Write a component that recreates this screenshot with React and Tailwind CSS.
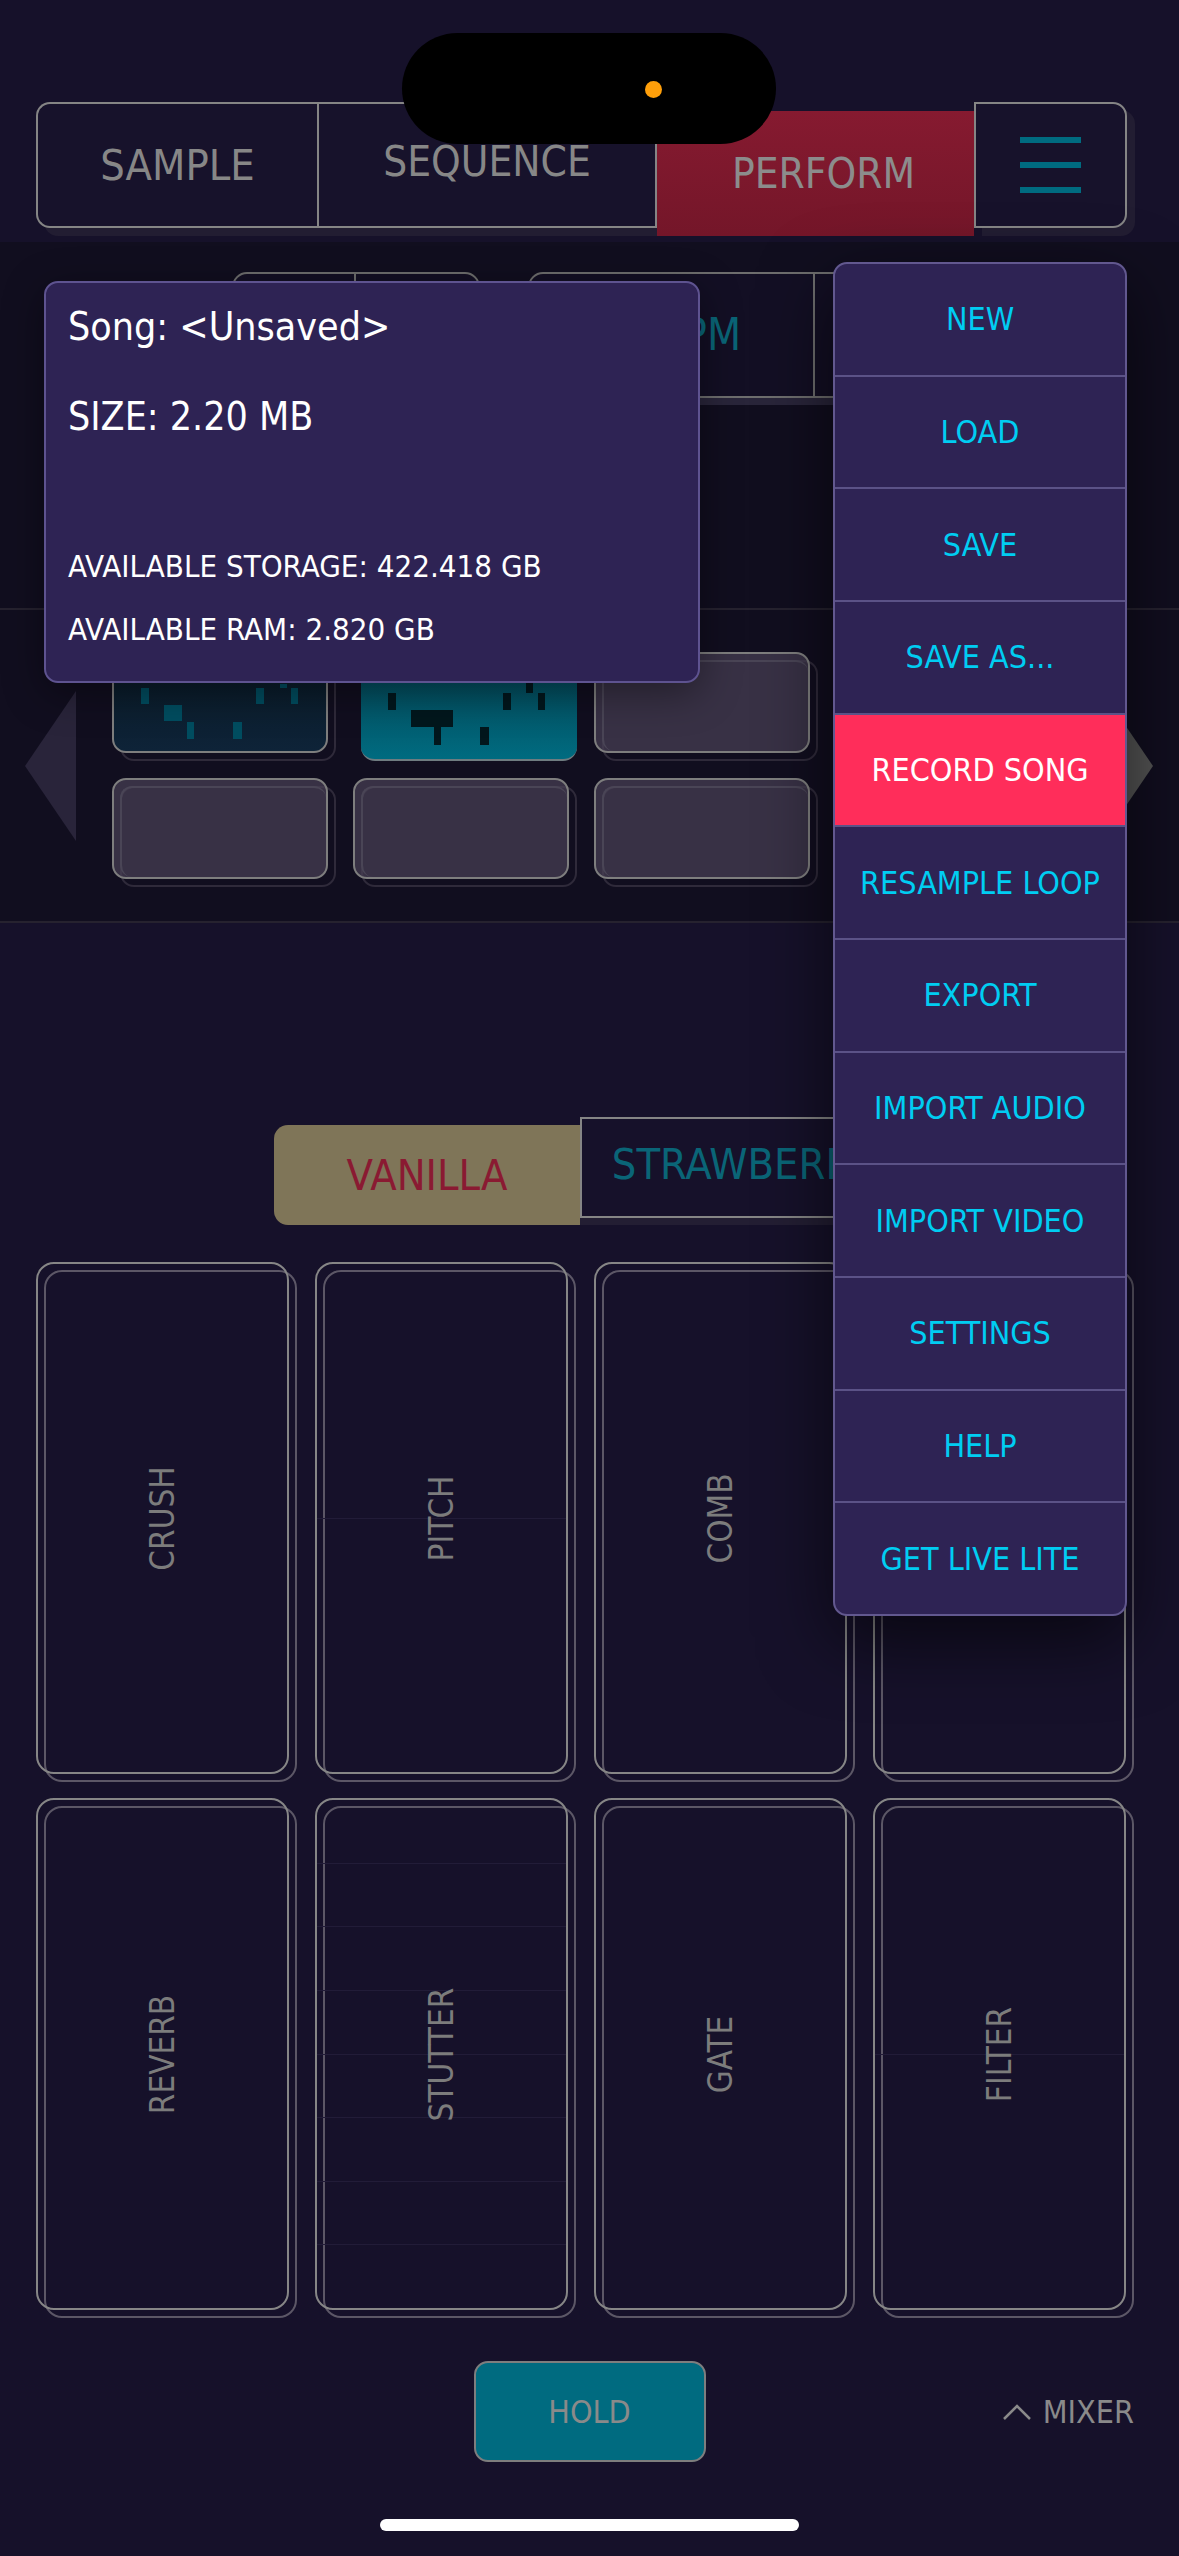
import React from "react";

const menuItems = [
  "NEW",
  "LOAD",
  "SAVE",
  "SAVE AS...",
  "RECORD SONG",
  "RESAMPLE LOOP",
  "EXPORT",
  "IMPORT AUDIO",
  "IMPORT VIDEO",
  "SETTINGS",
  "HELP",
  "GET LIVE LITE",
];

// the fourth pad of the top row sits under the menu, its label is never seen
const effects = [
  { name: "CRUSH", steps: 1 },
  { name: "PITCH", steps: 2 },
  { name: "COMB", steps: 1 },
  { name: "", steps: 1 },
  { name: "REVERB", steps: 1 },
  { name: "STUTTER", steps: 8 },
  { name: "GATE", steps: 1 },
  { name: "FILTER", steps: 2 },
];

// little rectangles drawn inside the two loaded loop pads
const dimBlocks = [
  [27, 34, 8, 16],
  [50, 51, 18, 16],
  [73, 68, 7, 17],
  [119, 68, 9, 17],
  [142, 34, 8, 16],
  [166, 30, 7, 4],
  [177, 34, 7, 16],
];
const litBlocks = [
  [27, 33, 8, 17],
  [50, 50, 42, 17],
  [73, 67, 7, 18],
  [119, 67, 9, 18],
  [142, 33, 8, 17],
  [165, 16, 7, 17],
  [177, 33, 7, 17],
];

function Blocks({ blocks, color }) {
  return (
    <svg className="absolute inset-0" width="216" height="101" viewBox="0 0 216 101">
      {blocks.map(([x, y, w, h], i) => (
        <rect key={i} x={x} y={y} width={w} height={h} fill={color} />
      ))}
    </svg>
  );
}

/** One cell of the loop grid: empty, loaded (dim) or playing (lit, pressed in). */
function LoopPad({ kind }) {
  if (kind === "lit") {
    return (
      <div className="relative h-[101px] w-[216px] translate-x-2 translate-y-2 overflow-hidden rounded-[14px] border-b-2 border-[#6f7c80] bg-gradient-to-b from-[#034656] to-[#006b80]">
        <Blocks blocks={litBlocks} color="#02171d" />
      </div>
    );
  }
  return (
    <div className="relative h-[101px] w-[216px]">
      <div className="absolute inset-0 translate-x-2 translate-y-2 rounded-[14px] border-2 border-[#2f2a3a]" />
      {kind === "dim" ? (
        <div className="relative h-full w-full overflow-hidden rounded-[14px] border-2 border-[#7e7e7e] bg-gradient-to-b from-[#091a26] to-[#0e2338]">
          <Blocks blocks={dimBlocks} color="#004d60" />
        </div>
      ) : (
        <div className="relative h-full w-full rounded-[14px] border-2 border-[#7e7e7e] bg-[rgba(72,64,84,0.72)]">
          <div className="absolute left-[6px] top-[6px] h-[calc(100%-6px)] w-[calc(100%-6px)] rounded-[12px] border-t-2 border-l-2 border-[#4a4556]" />
        </div>
      )}
    </div>
  );
}

function EffectPad({ name, steps }) {
  return (
    <div className="relative h-[512px] w-[253px]">
      <div className="absolute inset-0 translate-x-2 translate-y-2 rounded-[18px] border-2 border-[#5c5766]" />
      <div className="relative flex h-full w-full items-center justify-center overflow-hidden rounded-[18px] border-2 border-[#868686]">
        {steps > 1 && (
          <div className="absolute inset-0 flex flex-col">
            {Array.from({ length: steps }).map((_, i) => (
              <div key={i} className="flex-1 border-b border-[#221c38] last:border-b-0" />
            ))}
          </div>
        )}
        {name && (
          <span className="-rotate-90 whitespace-nowrap text-[33px] leading-none text-[#7c7c7c]">{name}</span>
        )}
      </div>
    </div>
  );
}

export default function App() {
  return (
    <div className="relative h-[2556px] w-[1179px] overflow-hidden bg-[#16112a] font-['Liberation_Sans_Narrow','DejaVu_Sans_Condensed','DejaVu_Sans',sans-serif] font-stretch-condensed">
      <div className="flex flex-col">
        {/* mode tabs */}
        <div className="flex items-start pl-[36px] pt-[102px]">
          <div className="flex h-[126px] w-[621px] rounded-l-[14px] border-2 border-r-0 border-[#858585] bg-[#17122b] shadow-[8px_8px_0_0_#221d32]">
            <div className="flex w-[281px] items-center justify-center border-r-2 border-[#858585] text-[43px] leading-none text-[#878787]">
              SAMPLE
            </div>
            <div className="flex flex-1 items-center justify-center border-r-2 border-[#858585] pb-[6px] text-[42px] leading-none text-[#878787]">
              SEQUENCE
            </div>
          </div>
          <div className="mt-[9px] flex h-[125px] w-[317px] items-center justify-center bg-gradient-to-b from-[#861a30] to-[#741629] pl-[16px] text-[42px] leading-none text-[#8c8c8c]">
            PERFORM
          </div>
          <div className="flex h-[126px] w-[153px] flex-col items-center justify-center gap-[19px] rounded-r-[14px] border-2 border-[#858585] bg-[#17122b] shadow-[8px_8px_0_0_#221d32]">
            <span className="h-[6px] w-[61px] bg-[#006b80]" />
            <span className="h-[6px] w-[61px] bg-[#006b80]" />
            <span className="h-[6px] w-[61px] bg-[#006b80]" />
          </div>
        </div>

        {/* song / loop section */}
        <div className="mt-[6px] flex h-[681px] flex-col bg-[#110e1f]">
          <div className="mt-[30px] flex h-[126px] items-start gap-[48px] pl-[232px] pr-[53px]">
            <div className="flex h-[126px] w-[248px] rounded-[15px] border-2 border-[#6e6e6e] bg-[#130f24] shadow-[0_7px_0_0_#29253a]">
              <div className="w-[122px] border-r-2 border-[#6e6e6e]" />
              <div className="flex-1" />
            </div>
            <div className="flex h-[126px] flex-1 rounded-[15px] border-2 border-[#6e6e6e] bg-[#130f24] shadow-[0_7px_0_0_#29253a]">
              <div className="flex w-[285px] items-center justify-center border-r-2 border-[#6e6e6e] pr-[34px] text-[44px] leading-none text-[#0a6577]">
                120 BPM
              </div>
              <div className="flex-1" />
            </div>
          </div>
          <div className="h-[210px]" />
          <div className="flex h-[315px] items-center border-y-2 border-[#26222f] pl-[25px]">
            <svg width="51" height="150" viewBox="0 0 51 150">
              <polygon points="51,0 0,75 51,150" fill="#29243a" />
            </svg>
            <div className="ml-[36px] grid grid-cols-[repeat(4,216px)] gap-x-[25px] gap-y-[25px]">
              <LoopPad kind="dim" />
              <LoopPad kind="lit" />
              <LoopPad kind="empty" />
              <LoopPad kind="empty" />
              <LoopPad kind="empty" />
              <LoopPad kind="empty" />
              <LoopPad kind="empty" />
              <LoopPad kind="empty" />
            </div>
            <svg className="ml-[51px]" width="51" height="150" viewBox="0 0 51 150">
              <polygon points="0,0 51,75 0,150" fill="#545454" />
            </svg>
          </div>
        </div>

        {/* flavour switch */}
        <div className="mt-[194px] flex items-start pl-[274px]">
          <div className="mt-[8px] flex h-[100px] w-[306px] items-center justify-center rounded-l-[14px] bg-[#7f7558] text-[43px] leading-none text-[#8a1a32]">
            VANILLA
          </div>
          <div className="flex h-[101px] w-[325px] items-center justify-center rounded-r-[14px] border-2 border-[#858585] bg-[#16112a] pb-[6px] text-[43px] leading-none text-[#0a6577] shadow-[0_7px_0_0_#231e33]">
            STRAWBERRY
          </div>
        </div>

        {/* effect pads */}
        <div className="mt-[37px] grid grid-cols-[repeat(4,253px)] gap-x-[26px] gap-y-[24px] pl-[36px]">
          {effects.map((fx, i) => (
            <EffectPad key={i} name={fx.name} steps={fx.steps} />
          ))}
        </div>

        {/* bottom controls */}
        <div className="mt-[51px] grid grid-cols-[1fr_232px_1fr] items-center">
          <div />
          <div className="flex h-[101px] items-center justify-center rounded-[14px] border-2 border-[#7e7e7e] bg-[#006b80] text-[32px] leading-none text-[#8a8a8a]">
            HOLD
          </div>
          <div className="flex items-center gap-[12px] justify-self-end pr-[45px] text-[32px] leading-none text-[#8a8a8a]">
            <svg width="28" height="16" viewBox="0 0 28 16">
              <polyline points="1,15 14,2 27,15" fill="none" stroke="#8a8a8a" strokeWidth="2.5" />
            </svg>
            MIXER
          </div>
        </div>
      </div>

      {/* camera island */}
      <div className="absolute left-[402px] top-[33px] h-[111px] w-[374px] rounded-full bg-black">
        <span className="absolute left-[243px] top-[48px] h-[17px] w-[17px] rounded-full bg-[#ff9f0a]" />
      </div>

      {/* song info popover */}
      <div className="absolute left-[44px] top-[281px] h-[402px] w-[656px] rounded-[14px] border-2 border-[#5e5390] bg-[#2e2354] pl-[22px] pt-[24px] text-white shadow-[0_10px_40px_rgba(0,0,0,0.4)]">
        <p className="text-[39px] leading-none">Song: &lt;Unsaved&gt;</p>
        <p className="mt-[51px] text-[39px] leading-none">SIZE: 2.20 MB</p>
        <p className="mt-[115px] text-[31px] leading-none">AVAILABLE STORAGE: 422.418 GB</p>
        <p className="mt-[32px] text-[31px] leading-none">AVAILABLE RAM: 2.820 GB</p>
      </div>

      {/* file menu */}
      <div className="absolute left-[833px] top-[262px] flex h-[1354px] w-[294px] flex-col overflow-hidden rounded-[14px] border-2 border-[#62588f] bg-[#2e2354] shadow-[0_24px_70px_rgba(0,0,0,0.6)]">
        {menuItems.map((item, i) => (
          <div
            key={item}
            className={`flex flex-1 items-center justify-center text-[32px] leading-none ${
              i > 0 ? "border-t-2 border-[#5b5287]" : ""
            } ${item === "RECORD SONG" ? "bg-[#ff2d5a] text-white" : "text-[#00cdf2]"}`}
          >
            {item}
          </div>
        ))}
      </div>

      {/* home indicator */}
      <div className="absolute left-[380px] top-[2519px] h-[12px] w-[419px] rounded-full bg-white" />
    </div>
  );
}
